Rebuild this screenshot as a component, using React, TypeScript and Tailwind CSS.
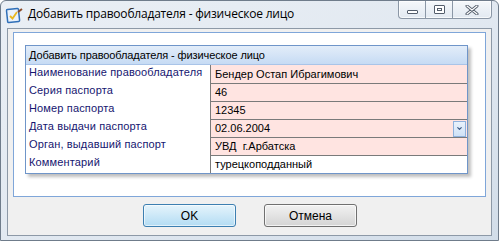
import { ChevronDown } from 'lucide-react';

const rows = [
  { label: 'Наименование правообладателя', value: 'Бендер Остап Ибрагимович', required: true },
  { label: 'Серия паспорта', value: '46', required: true },
  { label: 'Номер паспорта', value: '12345', required: true },
  { label: 'Дата выдачи паспорта', value: '02.06.2004', required: true, combo: true },
  { label: 'Орган, выдавший паспорт', value: 'УВД  г.Арбатска', required: true },
  { label: 'Комментарий', value: 'турецкоподданный', required: false },
];

function AppIcon() {
  return (
    <svg width="18" height="18" viewBox="0 0 18 18">
      <rect x="2" y="3" width="12" height="13" rx="1" fill="#eaf2fb" stroke="#2f6fb8" strokeWidth="1.5" transform="rotate(-6 8 9)" />
      <path d="M5 10 L7.5 12.5 L12 6" fill="none" stroke="#e8b820" strokeWidth="1.8" />
      <path d="M13 6 L17 3" stroke="#8a4b2a" strokeWidth="2" />
    </svg>
  );
}

function CaptionButtons() {
  return (
    <div className="flex h-[18px] self-start rounded-b-[4px] border border-t-0 border-[#8b97a6] bg-gradient-to-b from-[#f5f8fb] to-[#e2e9f1] shadow-[inset_0_0_0_1px_rgba(255,255,255,0.7)]">
      <div className="flex w-[27px] items-center justify-center border-r border-[#8b97a6]">
        <div className="mt-[4px] h-[4px] w-[11px] rounded-[1px] border border-[#535d6b] bg-white" />
      </div>
      <div className="flex w-[27px] items-center justify-center border-r border-[#8b97a6]">
        <div className="flex h-[9px] w-[11px] items-center justify-center rounded-[1px] border border-[#535d6b] bg-white">
          <div className="h-[3px] w-[5px] border border-[#535d6b]" />
        </div>
      </div>
      <div className="flex w-[38px] items-center justify-center">
        <svg width="14" height="10" viewBox="0 0 14 10">
          <path d="M2 1 L12 9 M12 1 L2 9" stroke="#535d6b" strokeWidth="3" strokeLinecap="round" />
          <path d="M2 1 L12 9 M12 1 L2 9" stroke="#ffffff" strokeWidth="1.2" strokeLinecap="round" />
        </svg>
      </div>
    </div>
  );
}

export default function App() {
  return (
    <div className="flex h-[241px] w-[499px] flex-col overflow-hidden rounded-t-[6px] border border-[#6f7c8b] bg-gradient-to-br from-[#eaeff5] via-[#e2e9f1] to-[#d2dde9] font-['Liberation_Sans',Arial,sans-serif]">
      {/* title bar */}
      <div className="flex h-[27px] shrink-0 items-start pl-[4px] pr-[6px]">
        <div className="mt-[5px]">
          <AppIcon />
        </div>
        <div className="ml-[5px] mt-[5px] font-['Open_Sans',sans-serif] text-[12px] leading-[16px] tracking-[-0.2px] text-black">
          Добавить правообладателя - физическое лицо
        </div>
        <div className="flex-1" />
        <CaptionButtons />
      </div>

      <div className="flex flex-1 px-[6px] pb-[4px]">
        <div className="flex flex-1 flex-col border border-[#8d99a7] bg-[#f0f0f0]">
          {/* white panel */}
          <div className="ml-[5px] mr-[5px] mt-[3px] h-[165px] border border-[#7fa6d9] bg-white pl-[11px] pt-[12px]">
            <div className="w-[443px] border border-[#6f95c9] bg-white text-[11px] leading-[13px] shadow-[3px_3px_3px_rgba(0,0,0,0.25)]">
              <div className="flex h-[19px] items-center border-b border-[#a9c4e8] bg-gradient-to-b from-[#e3edf9] to-[#c6dbf4] pl-[3px] tracking-[-0.1px] text-black">
                Добавить правообладателя - физическое лицо
              </div>
              {rows.map((r, i) => (
                <div key={i} className="flex h-[18px]">
                  <div className="w-[184px] pl-[3px] pt-[1px] tracking-[0.15px] text-[#161670]">{r.label}</div>
                  <div
                    className={`flex flex-1 items-center border-l border-[#7a7a7a] pl-[4px] text-black ${i > 0 ? 'border-t' : ''} ${
                      r.required ? 'bg-[#ffe4e1]' : 'bg-white'
                    }`}
                  >
                    <span className="flex-1 whitespace-pre">{r.value}</span>
                    {r.combo && (
                      <div className="mr-[1px] flex h-[16px] w-[13px] items-center justify-center border border-[#8fb1dd] bg-gradient-to-b from-[#e9f2fc] to-[#cfe1f6]">
                        <ChevronDown size={7} strokeWidth={4} color="#3c5a86" />
                      </div>
                    )}
                  </div>
                </div>
              ))}
            </div>
          </div>

          {/* buttons */}
          <div className="mt-[7px] flex gap-[28px] pl-[135px]">
            <button className="h-[23px] w-[93px] rounded-[3px] border border-[#3c7fb1] bg-gradient-to-b from-[#e5f4fc] to-[#b3dcf3] text-[12px] text-black shadow-[inset_0_0_0_1px_rgba(255,255,255,0.6)]">
              OK
            </button>
            <button className="h-[23px] w-[93px] rounded-[3px] border border-[#707070] bg-gradient-to-b from-[#f2f2f2] to-[#d4d4d4] text-[12px] text-black shadow-[inset_0_0_0_1px_rgba(255,255,255,0.7)]">
              Отмена
            </button>
          </div>
        </div>
      </div>
    </div>
  );
}
